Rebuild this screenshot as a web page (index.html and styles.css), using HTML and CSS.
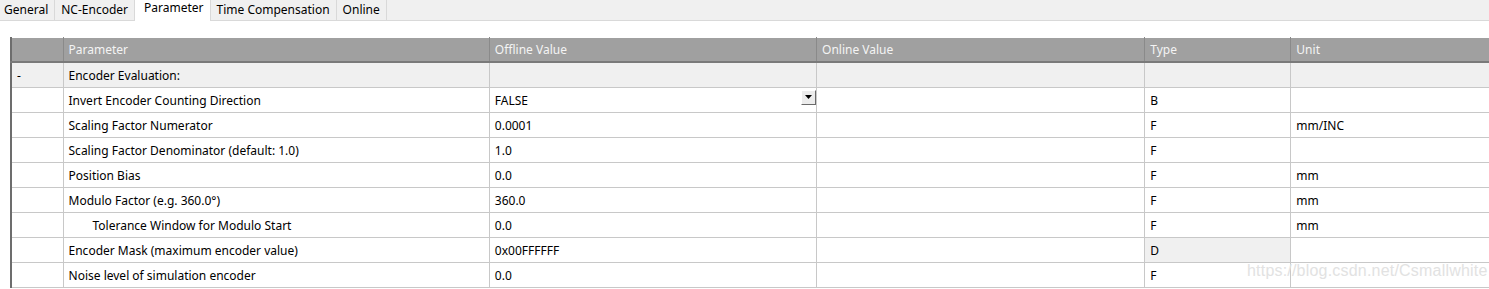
FILE: index.html
```html
<!DOCTYPE html>
<html>
<head>
<meta charset="utf-8">
<link rel="stylesheet" href="styles.css">
</head>
<body>
<div class="tabs">
  <div class="tab first">General</div>
  <div class="tab">NC-Encoder</div>
  <div class="tab active">Parameter</div>
  <div class="tab">Time Compensation</div>
  <div class="tab">Online</div>
</div>
<div class="pane">
  <table class="grid">
    <colgroup>
      <col class="c0"><col class="c1"><col class="c2"><col class="c3"><col class="c4"><col class="c5">
    </colgroup>
    <thead>
      <tr><th></th><th>Parameter</th><th>Offline Value</th><th>Online Value</th><th>Type</th><th>Unit</th></tr>
    </thead>
    <tbody>
      <tr class="group"><td>-</td><td>Encoder Evaluation:</td><td></td><td></td><td></td><td></td></tr>
      <tr><td></td><td>Invert Encoder Counting Direction</td><td><div class="combo"><span>FALSE</span><span class="drop"><svg width="7" height="4" viewBox="0 0 7 4"><path d="M0 0H7L3.5 4Z" fill="#000"/></svg></span></div></td><td></td><td>B</td><td></td></tr>
      <tr><td></td><td>Scaling Factor Numerator</td><td>0.0001</td><td></td><td>F</td><td>mm/INC</td></tr>
      <tr><td></td><td>Scaling Factor Denominator (default: 1.0)</td><td>1.0</td><td></td><td>F</td><td></td></tr>
      <tr><td></td><td>Position Bias</td><td>0.0</td><td></td><td>F</td><td>mm</td></tr>
      <tr><td></td><td>Modulo Factor (e.g. 360.0°)</td><td>360.0</td><td></td><td>F</td><td>mm</td></tr>
      <tr><td></td><td class="indent">Tolerance Window for Modulo Start</td><td>0.0</td><td></td><td>F</td><td>mm</td></tr>
      <tr><td></td><td>Encoder Mask (maximum encoder value)</td><td>0x00FFFFFF</td><td></td><td class="ro">D</td><td></td></tr>
      <tr><td></td><td>Noise level of simulation encoder</td><td>0.0</td><td></td><td>F</td><td></td></tr>
    </tbody>
  </table>
  <div class="watermark">https://blog.csdn.net/Csmallwhite</div>
</div>
</body>
</html>
```
FILE: styles.css
```css
html, body {
  margin: 0;
  padding: 0;
  background: #fff;
  overflow: hidden;
  font-family: "Noto Sans", "Noto Sans CJK SC", sans-serif;
  font-size: 12px;
  color: #000;
}
.tabs {
  display: flex;
  height: 20px;
  background: #f0f0f0;
  border-bottom: 1px solid #d9d9d9;
}
.tab {
  padding: 0 6px 0 6px;
  line-height: 20px;
  border-right: 1px solid #d9d9d9;
  font-size: 12px;
}
.tab.first { padding-left: 4px; }
.tab.active {
  background: #fff;
  line-height: 16px;
  padding: 0 6px 0 9px;
  margin-bottom: -1px;
}
.pane {
  position: relative;
  padding: 16px 0 0 10px;
}
.grid {
  border-collapse: collapse;
  table-layout: fixed;
  width: 1479px;
  border-left: 2px solid #6d6d6d;
  border-top: 1px solid #8c8c8c;
}
.c0 { width: 52px; }
.c1 { width: 426px; }
.c2 { width: 327px; }
.c3 { width: 328px; }
.c4 { width: 146px; }
.c5 { width: 198px; }
th {
  background: #a0a0a0;
  color: #f4f4f4;
  font-weight: normal;
  text-align: left;
  height: 23px;
  padding: 0 5px;
  border-top: 1px solid #fff;
  border-left: 1px solid #e4e4e4;
  border-right: 1px solid #8a8a8a;
  border-bottom: 2px solid #7a7a7a;
  white-space: nowrap;
}
th:first-child { border-left: none; }
th:last-child { border-right: none; }
td {
  height: 24px;
  padding: 0 5px;
  border-right: 1px solid #c8c8c8;
  border-bottom: 1px solid #c8c8c8;
  white-space: nowrap;
  overflow: hidden;
}
td:last-child { border-right: none; }
tr.group td { background: #f0f0f0; }
td.indent { padding-left: 29px; }
td.ro { background: #f0f0f0; }
.combo {
  display: flex;
  justify-content: space-between;
  align-items: center;
}
.drop {
  width: 15px;
  height: 15px;
  margin-right: -5px;
  margin-top: -6px;
  box-sizing: border-box;
  background: #ececec;
  border-top: 1px solid #fff;
  border-left: 1px solid #fff;
  border-right: 1px solid #6a6a6a;
  border-bottom: 1px solid #6a6a6a;
  display: flex;
  align-items: center;
  justify-content: center;
}
.watermark {
  position: absolute;
  left: 1247px;
  top: 241px;
  font-family: "Liberation Sans", sans-serif;
  font-size: 16px;
  color: #e2e2e2;
  letter-spacing: 0.2px;
}
```
